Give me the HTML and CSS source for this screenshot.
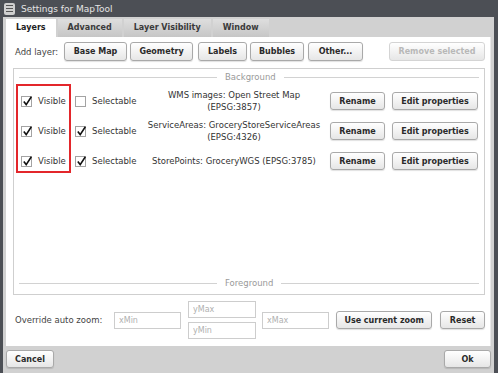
FILE: index.html
```html
<!DOCTYPE html>
<html lang="en">
<head>
    <meta charset="UTF-8">
    <title>Settings for MapTool</title>
    <link rel="stylesheet" href="styles.css">
</head>
<body>
    <div class="window">
        <div class="titlebar">
            <span class="title-icon"><i></i><i></i><i></i></span>
            <span>Settings for MapTool</span>
        </div>

        <div class="frame">
            <div class="tabs">
                <div class="tab active">Layers</div>
                <div class="tab">Advanced</div>
                <div class="tab">Layer Visibility</div>
                <div class="tab">Window</div>
            </div>

            <div class="panel">
                <div class="add-row">
                    <span class="add-label">Add layer:</span>
                    <button class="btn w-base">Base Map</button>
                    <button class="btn w-geom">Geometry</button>
                    <button class="btn w-labels">Labels</button>
                    <button class="btn w-bubbles">Bubbles</button>
                    <button class="btn w-other">Other...</button>
                    <button class="btn w-remove" disabled>Remove selected</button>
                </div>

                <div class="group">
                    <div class="divider"><span class="line short"></span><span>Background</span><span class="line"></span></div>

                    <div class="layers">
                        <div class="layer-row">
                            <span class="cell-visible"><span class="check on"></span>Visible</span>
                            <span class="cell-select"><span class="check"></span>Selectable</span>
                            <span class="layer-name">WMS images: Open Street Map<br>(EPSG:3857)</span>
                            <button class="btn w-rename">Rename</button>
                            <button class="btn w-edit">Edit properties</button>
                        </div>
                        <div class="layer-row">
                            <span class="cell-visible"><span class="check on"></span>Visible</span>
                            <span class="cell-select"><span class="check on"></span>Selectable</span>
                            <span class="layer-name">ServiceAreas: GroceryStoreServiceAreas<br>(EPSG:4326)</span>
                            <button class="btn w-rename">Rename</button>
                            <button class="btn w-edit">Edit properties</button>
                        </div>
                        <div class="layer-row">
                            <span class="cell-visible"><span class="check on"></span>Visible</span>
                            <span class="cell-select"><span class="check on"></span>Selectable</span>
                            <span class="layer-name">StorePoints: GroceryWGS (EPSG:3785)</span>
                            <button class="btn w-rename">Rename</button>
                            <button class="btn w-edit">Edit properties</button>
                        </div>
                    </div>

                    <div class="highlight"></div>

                    <div class="divider bottom"><span class="line short"></span><span>Foreground</span><span class="line"></span></div>
                </div>

                <div class="zoom-row">
                    <span class="zoom-label">Override auto zoom:</span>
                    <input class="field" type="text" placeholder="xMin">
                    <div class="field-stack">
                        <input class="field" type="text" placeholder="yMax">
                        <input class="field" type="text" placeholder="yMin">
                    </div>
                    <input class="field" type="text" placeholder="xMax">
                    <button class="btn w-current">Use current zoom</button>
                    <button class="btn w-reset">Reset</button>
                </div>
            </div>

            <div class="footer">
                <button class="btn w-cancel">Cancel</button>
                <button class="btn w-ok">Ok</button>
            </div>
        </div>
    </div>
</body>
</html>
```

FILE: styles.css
```css
body {
    margin: 0;
    background-color: #4c4f55;
    font-family: "DejaVu Sans", Verdana, sans-serif;
    font-size: 8.5px;
    color: #333;
}
.window {
    width: 498px;
    height: 373px;
    display: flex;
    flex-direction: column;
}
.titlebar {
    height: 17px;
    display: flex;
    align-items: center;
    gap: 6px;
    padding-left: 4px;
    color: #e4e4e4;
    font-size: 9px;
}
.title-icon {
    width: 11px;
    height: 12px;
    border-radius: 2px;
    background-color: #cfcfcf;
    display: flex;
    flex-direction: column;
    justify-content: center;
    gap: 2px;
    padding: 0 2px;
    box-sizing: border-box;
}
.title-icon i {
    display: block;
    height: 1px;
    background-color: #555;
}
.frame {
    flex: 1;
    margin: 0 4px 0 3px;
    padding: 2px 3px 0;
    background-color: #d1d1d1;
    display: flex;
    flex-direction: column;
}
.tabs {
    display: flex;
    gap: 2px;
    height: 18px;
    font-size: 8px;
}
.tab {
    padding: 0 10px;
    line-height: 18px;
    font-weight: bold;
    color: #3a3a3a;
    background: linear-gradient(#dedede, #c6c6c6);
}
.tab.active {
    background: #fff;
    color: #222;
}
.panel {
    height: 309px;
    box-sizing: border-box;
    background-color: #fff;
    padding: 5px 5px 0 7px;
    border-right: 1px solid #e8e8e8;
}
.add-row {
    display: flex;
    align-items: center;
    height: 19px;
    gap: 3px;
}
.add-label {
    flex: none;
    width: 46px;
    margin-left: 2px;
    color: #444;
    white-space: nowrap;
}
.btn {
    height: 19px;
    padding: 0;
    font-family: inherit;
    font-size: 8px;
    font-weight: bold;
    color: #2a2a2a;
    background: linear-gradient(#ffffff, #e6e6e6);
    border: 1px solid #a9a9a9;
    border-radius: 3px;
    box-shadow: 0 1px 1px rgba(0, 0, 0, 0.12);
}
.btn:disabled {
    color: #b8b8b8;
    border-color: #d4d4d4;
    box-shadow: none;
}
.w-base { width: 63px; }
.w-geom { width: 63px; }
.w-labels { width: 49px; margin-left: 2px; }
.w-bubbles { width: 54px; }
.w-other { width: 55px; margin-left: 1px; }
.w-remove { width: 96px; margin-left: auto; }
.w-rename { width: 55px; height: 18px; }
.w-edit { width: 86px; height: 18px; margin-left: 7px; }
.w-current { width: 97px; height: 18px; }
.w-reset { width: 45px; height: 18px; margin-left: 8px; }
.w-cancel { width: 48px; height: 18px; }
.w-ok { width: 47px; height: 18px; }
.group {
    position: relative;
    height: 227px;
    box-sizing: border-box;
    margin-top: 7px;
    border: 1px solid #cfcfcf;
    display: flex;
    flex-direction: column;
    padding: 0 5px;
}
.divider {
    display: flex;
    align-items: center;
    gap: 8px;
    height: 14px;
    margin-top: 1px;
    color: #9a9a9a;
}
.divider.bottom {
    margin-top: auto;
    margin-bottom: 4px;
}
.line {
    flex: 1;
    height: 1px;
    background-color: #d2d2d2;
}
.line.short {
    flex: 0 0 198px;
}
.layers {
    margin-top: 2px;
}
.layer-row {
    display: flex;
    align-items: center;
    height: 30px;
    padding-left: 2px;
}
.cell-visible,
.cell-select {
    display: flex;
    align-items: center;
    gap: 6px;
    color: #333;
}
.cell-visible { width: 54px; }
.cell-select { width: 70px; }
.check {
    width: 11px;
    height: 11px;
    box-sizing: border-box;
    border: 1px solid #a3a3a3;
    background-color: #fff;
    position: relative;
    flex: none;
}
.check.on::after {
    content: "";
    position: absolute;
    left: 1px;
    top: -1px;
    width: 9px;
    height: 10px;
    background: url("data:image/svg+xml,%3Csvg xmlns='http://www.w3.org/2000/svg' width='9' height='10' viewBox='0 0 9 10'%3E%3Cpath d='M0.8 5.6 L3.2 8.6 L8.4 0.8' fill='none' stroke='%23111' stroke-width='1.6'/%3E%3C/svg%3E") no-repeat;
}
.layer-name {
    width: 178px;
    margin-right: 7px;
    text-align: center;
    line-height: 12px;
    color: #333;
}
.highlight {
    position: absolute;
    left: 2px;
    top: 15px;
    width: 55px;
    height: 89px;
    box-sizing: border-box;
    border: 2px solid #e3262b;
}
.zoom-row {
    display: flex;
    align-items: center;
    height: 38px;
    margin-top: 6px;
}
.zoom-label {
    flex: none;
    width: 99px;
    margin-left: 2px;
    color: #444;
}
.field {
    flex: none;
    width: 67px;
    height: 17px;
    box-sizing: border-box;
    border: 1px solid #cdcdcd;
    padding: 0 4px;
    font-family: inherit;
    font-size: 8px;
    margin-right: 7px;
}
.field::placeholder {
    color: #b0b0b0;
}
.field-stack {
    display: flex;
    flex-direction: column;
    gap: 4px;
}
.field-stack .field {
    width: 68px;
    margin-right: 6px;
}
.footer {
    flex: 1;
    display: flex;
    justify-content: space-between;
    align-items: flex-start;
    padding-top: 4px;
}
```
